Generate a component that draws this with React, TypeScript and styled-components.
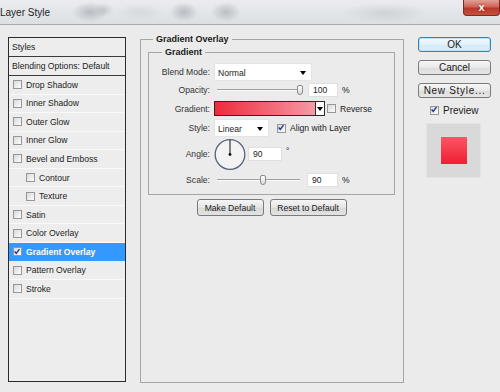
import React from "react";
import styled, { createGlobalStyle, css } from "styled-components";

const GlobalStyle = createGlobalStyle`
  html, body { margin: 0; padding: 0; background: #ebebeb; }
  body { font-family: "Liberation Sans", Arial, sans-serif; }
  #root { width: 500px; height: 392px; overflow: hidden; }
  * { box-sizing: border-box; }
`;

const Window = styled.div`
  width: 500px;
  height: 392px;
  display: flex;
  flex-direction: column;
  background: #ebebeb;
  color: #222;
`;

const TitleBar = styled.div`
  height: 25px;
  flex: none;
  display: flex;
  align-items: center;
  border-bottom: 1px solid #a9acb0;
  background:
    radial-gradient(ellipse 18px 10px at 90px 12px, rgba(120, 125, 132, 0.4), transparent),
    radial-gradient(ellipse 10px 7px at 104px 10px, rgba(120, 125, 132, 0.25), transparent),
    radial-gradient(ellipse 24px 9px at 140px 12px, rgba(160, 165, 170, 0.18), transparent),
    radial-gradient(ellipse 14px 10px at 184px 12px, rgba(120, 125, 132, 0.4), transparent),
    radial-gradient(ellipse 15px 10px at 226px 12px, rgba(120, 125, 132, 0.38), transparent),
    radial-gradient(ellipse 42px 10px at 385px 13px, rgba(170, 175, 180, 0.35), transparent),
    linear-gradient(#eaecef, #dcdfe3);
`;

const Title = styled.span`
  font-size: 10px;
  color: #1e1e1e;
  margin-top: 1px;
`;

const CloseButton = styled.div`
  align-self: flex-start;
  margin-left: auto;
  width: 37px;
  height: 16px;
  border: 1px solid #7e2a22;
  border-top: none;
  border-radius: 0 0 4px 4px;
  background: linear-gradient(#e2a096, #cf6455 45%, #b8372a 55%, #c8503f);
  color: #fff;
  font-weight: bold;
  font-size: 11px;
  line-height: 14px;
  text-align: center;
  text-shadow: 0 0 2px #5a1810;
`;

const Body = styled.div`
  flex: 1;
  display: flex;
  padding: 8px 9px 9px 8px;
`;

const StylesPanel = styled.div`
  width: 118px;
  flex: none;
  margin: 4px 0 1px 0;
  border: 1px solid #2b2b2b;
  background: #ededed;
  display: flex;
  flex-direction: column;
`;

const PanelHeader = styled.div`
  height: 19px;
  flex: none;
  border-bottom: 1px solid #3a3a3a;
  padding-left: 3px;
  font-size: 8.6px;
  display: flex;
  align-items: center;
`;

const StyleItem = styled.div<{ $indent?: boolean; $selected?: boolean }>`
  height: 18.55px;
  flex: none;
  display: flex;
  align-items: center;
  gap: 4px;
  padding-left: ${(p) => (p.$indent ? 17 : 4)}px;
  border-bottom: 1px solid #f9f9f9;
  font-size: 8.6px;
  color: #222;
  ${(p) =>
    p.$selected &&
    css`
      background: #3399ff;
      color: #fff;
      font-weight: bold;
      border-bottom-color: #3399ff;
    `}
`;

const Box = styled.span`
  width: 9px;
  height: 9px;
  flex: none;
  border: 1px solid #969797;
  background: linear-gradient(135deg, #dadada, #fcfcfc);
  display: inline-flex;
  align-items: center;
  justify-content: center;
`;

const Check = ({ checked }: { checked?: boolean }) => (
  <Box>
    {checked && (
      <svg width="9" height="9" viewBox="0 0 9 9" style={{ marginLeft: -1, marginTop: -1 }}>
        <path d="M1.8 4.4 L3.7 6.6 L7.3 1.8" stroke="#24418e" strokeWidth="1.7" fill="none" />
      </svg>
    )}
  </Box>
);

const Group = styled.fieldset`
  margin: 0 0 0 14px;
  padding: 0;
  width: 264px;
  flex: none;
  min-width: 0;
  border: 1px solid #a6a6a6;
`;

const SubGroup = styled.fieldset`
  margin: 0;
  padding: 0;
  min-width: 0;
  border: 1px solid #a6a6a6;
`;

const Legend = styled.legend<{ $offset: number }>`
  font-size: 9px;
  font-weight: bold;
  line-height: 12px;
  padding: 0 3px;
  margin-left: ${(p) => p.$offset}px;
  color: #1a1a1a;
`;

const GroupBody = styled.div`
  padding: 1px 8px 0 7px;
`;

const FormGrid = styled.div`
  display: grid;
  grid-template-columns: 61px 1fr;
  grid-template-rows: 18px 18px 19px 20px 32px 20px;
  column-gap: 4px;
  align-items: center;
  padding: 5px 0 4px 0;
`;

const Label = styled.div`
  text-align: right;
  font-size: 8.6px;
  color: #333;
`;

const Controls = styled.div`
  display: flex;
  align-items: center;
  font-size: 8.6px;
  color: #222;
`;

const Select = styled.div<{ $w: number }>`
  width: ${(p) => p.$w}px;
  height: 18px;
  background: #fff;
  border: 1px solid #e4e4e4;
  display: flex;
  align-items: center;
  justify-content: space-between;
  padding: 1px 5px 0 3px;
  font-size: 8.6px;
`;

const Arrow = styled.span`
  width: 0;
  height: 0;
  border-left: 3px solid transparent;
  border-right: 3px solid transparent;
  border-top: 4px solid #000;
`;

const Input = styled.div<{ $w: number; $ml: number }>`
  width: ${(p) => p.$w}px;
  height: 14px;
  margin-left: ${(p) => p.$ml}px;
  background: #fff;
  border: 1px solid #e0e0e0;
  display: flex;
  align-items: center;
  padding-left: 4px;
  font-size: 8.6px;
`;

const Unit = styled.span<{ $ml?: number; $up?: boolean }>`
  margin-left: ${(p) => p.$ml ?? 4}px;
  font-size: 8.6px;
  ${(p) => p.$up && css`align-self: flex-start; margin-top: 7px;`}
`;

const Slider = styled.div`
  position: relative;
  width: 90px;
  height: 14px;
  display: flex;
  align-items: center;
  padding: 0 4px 0 3px;
`;

const Track = styled.div`
  flex: 1;
  height: 2px;
  border-top: 1px solid #a0a0a0;
  border-bottom: 1px solid #fbfbfb;
`;

const Thumb = styled.div`
  position: absolute;
  top: 2px;
  width: 6px;
  height: 10px;
  border: 1px solid #8a8a8a;
  border-radius: 2px 2px 3px 3px;
  background: linear-gradient(#ffffff, #d8d8d8);
`;

const Swatch = styled.div`
  width: 102px;
  height: 15px;
  border: 1px solid #2a2a2a;
  background: linear-gradient(to right, #ef2a3b, #f59aa5);
`;

const SwatchDrop = styled.div`
  width: 9px;
  height: 15px;
  border: 1px solid #2a2a2a;
  border-left: none;
  background: #fff;
  display: flex;
  align-items: center;
  justify-content: center;
`;

const Gap = styled.span<{ $w: number }>`
  width: ${(p) => p.$w}px;
  flex: none;
`;

const ButtonRow = styled.div`
  display: flex;
  justify-content: center;
  gap: 6px;
  margin-top: 4px;
`;

const Button = styled.div<{ $w: number }>`
  width: ${(p) => p.$w}px;
  height: 17px;
  border: 1px solid #7a7a7a;
  border-radius: 3px;
  background: linear-gradient(#f6f6f6, #e4e4e4 50%, #d9d9d9 52%, #e2e2e2);
  font-size: 8.6px;
  display: flex;
  align-items: center;
  justify-content: center;
  color: #222;
`;

const Side = styled.div`
  width: 73px;
  flex: none;
  margin: 4px 0 0 14px;
  display: flex;
  flex-direction: column;
`;

const SideButton = styled.div<{ $primary?: boolean; $spaced?: boolean }>`
  height: 15px;
  margin-bottom: 8px;
  border: 1px solid #7a7a7a;
  border-radius: 3px;
  background: linear-gradient(#f7f7f7, #e8e8e8 50%, #dcdcdc 52%, #e6e6e6);
  font-size: 10px;
  display: flex;
  align-items: center;
  justify-content: center;
  color: #1a1a1a;
  ${(p) => p.$spaced && css`letter-spacing: 0.7px;`}
  ${(p) =>
    p.$primary &&
    css`
      border-color: #3c7fb1;
      background: linear-gradient(#f4fafe, #e2f1fb 50%, #d2eaf9 52%, #dcedf8);
      box-shadow: inset 0 0 0 1px #bfe2f7;
    `}
`;

const PreviewRow = styled.div`
  display: flex;
  align-items: center;
  gap: 4px;
  height: 12px;
  padding-left: 12px;
  margin-top: -2px;
  font-size: 10px;
`;

const PreviewBox = styled.div`
  width: 55px;
  height: 55px;
  margin: 7px 0 0 8px;
  background: #d9d9d9;
  border: 1px solid #e4e4e4;
  display: flex;
  align-items: center;
  justify-content: center;
`;

const PreviewSwatch = styled.div`
  width: 26px;
  height: 27px;
  background: linear-gradient(#fb5666, #ee1f31);
`;

const styleItems: { label: string; indent?: boolean; checked?: boolean; selected?: boolean }[] = [
  { label: "Drop Shadow" },
  { label: "Inner Shadow" },
  { label: "Outer Glow" },
  { label: "Inner Glow" },
  { label: "Bevel and Emboss" },
  { label: "Contour", indent: true },
  { label: "Texture", indent: true },
  { label: "Satin" },
  { label: "Color Overlay" },
  { label: "Gradient Overlay", checked: true, selected: true },
  { label: "Pattern Overlay" },
  { label: "Stroke" },
];

const SliderControl = ({ pos }: { pos: number }) => (
  <Slider>
    <Track />
    <Thumb style={{ left: pos - 3 }} />
  </Slider>
);

const Dial = () => (
  <svg width="32" height="31" viewBox="0 0 32 31">
    <circle cx="16" cy="15.5" r="14.8" fill="#f3f3f3" stroke="#56627c" strokeWidth="1.3" />
    <line x1="16" y1="15.5" x2="16" y2="1" stroke="#111" strokeWidth="1" />
    <circle cx="16" cy="15.5" r="1.4" fill="#111" />
  </svg>
);

export default function App() {
  return (
    <>
      <GlobalStyle />
      <Window>
        <TitleBar>
          <Title>Layer Style</Title>
          <CloseButton>x</CloseButton>
        </TitleBar>
        <Body>
          <StylesPanel>
            <PanelHeader>Styles</PanelHeader>
            <PanelHeader>Blending Options: Default</PanelHeader>
            {styleItems.map((it) => (
              <StyleItem key={it.label} $indent={it.indent} $selected={it.selected}>
                <Check checked={it.checked} />
                {it.label}
              </StyleItem>
            ))}
          </StylesPanel>

          <Group>
            <Legend $offset={12}>Gradient Overlay</Legend>
            <GroupBody>
              <SubGroup>
                <Legend $offset={13}>Gradient</Legend>
                <FormGrid>
                  <Label>Blend Mode:</Label>
                  <Controls>
                    <Select $w={98}>
                      Normal
                      <Arrow />
                    </Select>
                  </Controls>

                  <Label>Opacity:</Label>
                  <Controls>
                    <SliderControl pos={86} />
                    <Input $w={30} $ml={4}>100</Input>
                    <Unit>%</Unit>
                  </Controls>

                  <Label>Gradient:</Label>
                  <Controls>
                    <Swatch />
                    <SwatchDrop>
                      <Arrow />
                    </SwatchDrop>
                    <Gap $w={2} />
                    <Check />
                    <Unit $ml={4}>Reverse</Unit>
                  </Controls>

                  <Label>Style:</Label>
                  <Controls>
                    <Select $w={55}>
                      Linear
                      <Arrow />
                    </Select>
                    <Gap $w={8} />
                    <Check checked />
                    <Unit $ml={4}>Align with Layer</Unit>
                  </Controls>

                  <Label>Angle:</Label>
                  <Controls>
                    <Dial />
                    <Input $w={34} $ml={2}>90</Input>
                    <Unit $up>°</Unit>
                  </Controls>

                  <Label>Scale:</Label>
                  <Controls>
                    <SliderControl pos={49} />
                    <Input $w={31} $ml={3}>90</Input>
                    <Unit>%</Unit>
                  </Controls>
                </FormGrid>
              </SubGroup>
              <ButtonRow>
                <Button $w={67}>Make Default</Button>
                <Button $w={77}>Reset to Default</Button>
              </ButtonRow>
            </GroupBody>
          </Group>

          <Side>
            <SideButton $primary>OK</SideButton>
            <SideButton>Cancel</SideButton>
            <SideButton $spaced>New Style...</SideButton>
            <PreviewRow>
              <Check checked />
              Preview
            </PreviewRow>
            <PreviewBox>
              <PreviewSwatch />
            </PreviewBox>
          </Side>
        </Body>
      </Window>
    </>
  );
}
